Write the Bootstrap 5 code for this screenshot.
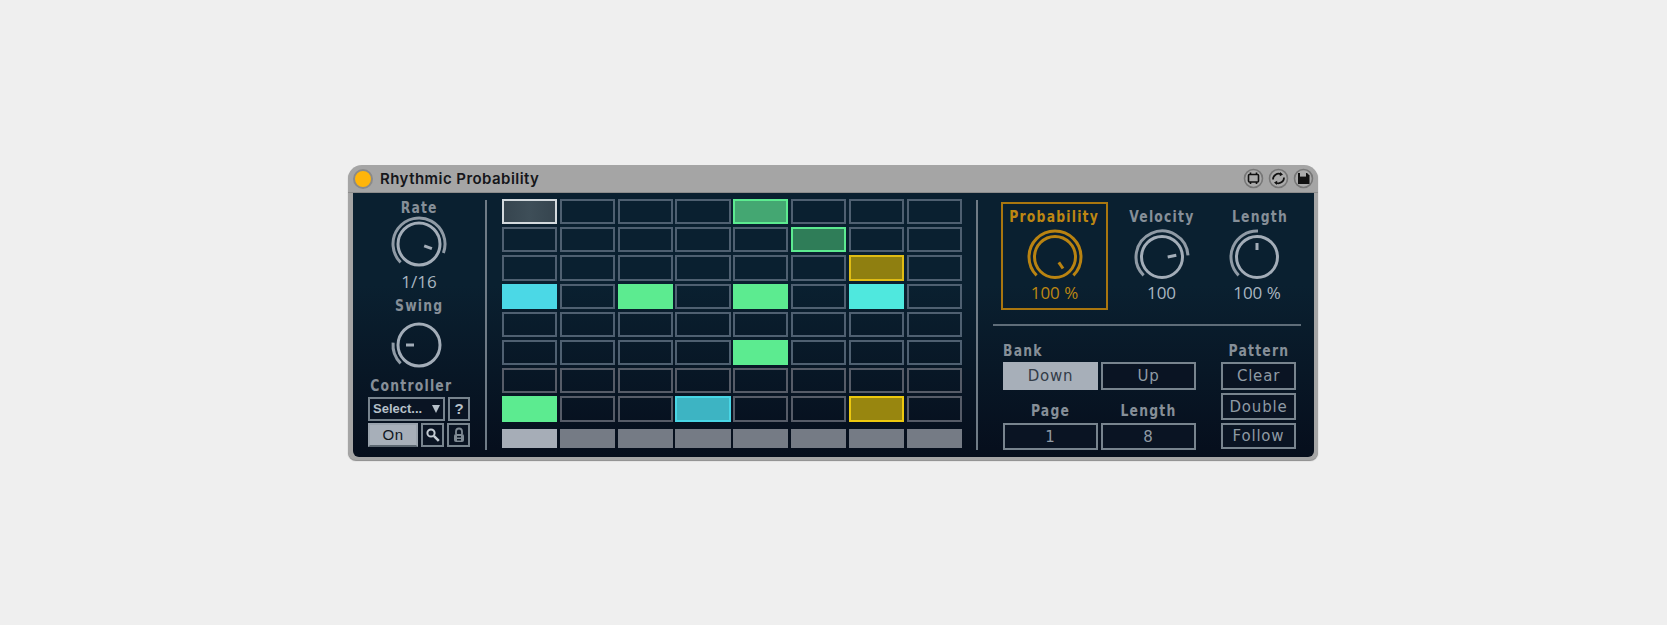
<!doctype html>
<html><head><meta charset="utf-8"><title>Rhythmic Probability</title>
<link href="https://cdn.jsdelivr.net/npm/bootstrap@5.3.0/dist/css/bootstrap.min.css" rel="stylesheet">
<style>
html,body{height:625px;background:#efefef;margin:0}
body{padding:165px 0 0 348px;overflow:hidden}
.dev{width:970px;height:295px;background:#a5a5a5;border-radius:14px 14px 8px 8px;box-shadow:0 1px 1px #8a8a8a}
.tbar{height:28px;padding:0 4px 0 5px;border-bottom:1px solid #8c8c8c}
.dot{width:20px;height:20px;border-radius:50%;background:#ffb50a;border:2px solid #8a8a8a}
.ttl{font:600 15px/1 "Inter",sans-serif;color:#15161a;margin-left:7px;letter-spacing:.45px}
.tb{width:21px;height:21px;display:block;margin-left:4px}
.main{height:264px;margin:0 4px 3px 5px;background:linear-gradient(#0a2030,#0a2030 35%,#060e1c);border-radius:0 0 6px 6px}
.lcol{width:132px;padding-top:6px}
.vline{width:2px;height:250px;margin-top:7px;background:#6f7b86}
.gridcol{width:489px;padding:6px 0 0 14.8px}
.cells{display:grid;grid-template-columns:repeat(8,55.1px);grid-auto-rows:25.2px;gap:3px 2.8px}
.c{border:2px solid #4f6071}
.c.dim{border-color:#565c68}
.w{background:linear-gradient(90deg,#36454f,#3e4e58,#36454f);border-color:#d3d9dd}
.g{background:#5ceb90;border-color:#5ceb90}
.g2{background:#44a772;border-color:#5ceb90}
.g3{background:#2f7d58;border-color:#5ceb90}
.c.y{background:#8f7f10;border-color:#e0bc14}
.c.y2{background:#98860f;border-color:#ecc80f}
.b{background:#4bd8e6;border-color:#4bd8e6}
.b2{background:#4fe8de;border-color:#4fe8de}
.c.b3{background:#3db4c3;border-color:#48d6e6}
.c.g{border-color:#5ceb90}
.strip{display:grid;grid-template-columns:repeat(8,55.1px);gap:2.8px;margin-top:7.6px;height:19px}
.st{background:#757b85}.st1{background:#a6adb7}
.rcol{width:330px;padding:9px 0 0 0}
.lb{font:700 15.5px/18px "DejaVu Sans",sans-serif;letter-spacing:1.5px;color:#868f98;transform:scaleX(.8);white-space:nowrap}
.val{font:400 17px/18px "Open Sans",sans-serif;color:#a9b6c1}
.knob{display:block;width:60px;height:60px}
.knob path,.knob circle{fill:none;stroke:#8f9aa5;stroke-width:3}
.knob .i{stroke:#a3adb8}
.hot .knob path,.hot .knob circle{stroke:#b98311}
.hot .lb,.hot .val{color:#bd8612}
.kb{width:107px;height:108px;padding-top:4px;border:2px solid transparent}
.hot{border-color:#a9760f}
.rsep{height:2px;background:#5f6d79;width:308px;margin:14px 0 0 15px}
.box{border:2px solid #78848e;color:#8f9aa4;font:400 15px/24px "DejaVu Sans",sans-serif;letter-spacing:.8px;text-align:center;background:#0a1423}
.box.on{background:#a7afb9;border-color:#a7afb9;color:#333c48}
.ctrl{font:700 13px/17px "Liberation Sans",sans-serif;color:#b6c0c9;border:2px solid #78848e;background:#0a1423}
</style></head><body>
<div class="dev d-flex flex-column">
 <div class="tbar d-flex align-items-center">
  <div class="dot"></div><div class="ttl flex-grow-1">Rhythmic Probability</div>
  <svg class="tb" viewBox="0 0 21 21"><circle cx="10.5" cy="10.5" r="9" fill="#aaa" stroke="#777" stroke-width="1.6"/><rect x="5.5" y="6.500" width="10" height="7.5" rx="1" fill="none" stroke="#111" stroke-width="1.6"/><path d="M7.5 4.5v2M13.5 4.5v2M7.5 14v2M13.5 14v2" stroke="#111" stroke-width="1.6"/></svg>
  <svg class="tb" viewBox="0 0 21 21"><circle cx="10.5" cy="10.5" r="9" fill="#aaa" stroke="#777" stroke-width="1.6"/><path d="M5 11.5a5.6 5.6 0 0 1 8-5.2M16 9.5a5.6 5.6 0 0 1-8 5.2" fill="none" stroke="#111" stroke-width="1.7"/><path d="M12 4l3 2.6-3.2 1.6zM9 17l-3-2.6 3.2-1.6z" fill="#111"/></svg>
  <svg class="tb" viewBox="0 0 21 21"><circle cx="10.5" cy="10.5" r="9" fill="#aaa" stroke="#777" stroke-width="1.6"/><path d="M5 5h9l2.5 2.5V16H5z" fill="#111"/><rect x="7" y="5" width="6" height="3.6" fill="#aaa"/></svg>
 </div>
 <div class="main d-flex">
  <div class="lcol d-flex flex-column align-items-center">
   <div class="lb">Rate</div>
   <svg class="knob" style="margin-top:-3px" viewBox="0 0 60 60"><path d="M11.62 48.38A26 26 0 1 1 54.43 38.89"/><circle class="i" cx="30" cy="30" r="21"/><path class="i" d="M35.2 31.9L42.9 34.7"/></svg>
   <div class="val" style="margin-top:-1px">1/16</div>
   <div class="lb" style="margin-top:6px">Swing</div>
   <svg class="knob" style="margin-top:0" viewBox="0 0 60 60"><path d="M11.62 48.38A26 26 0 0 1 4.1 27.7"/><circle class="i" cx="30" cy="30" r="21"/><path class="i" d="M25 30H17"/></svg>
   <div class="lb" style="margin:2px 15px 0 0">Controller</div>
   <div class="d-flex" style="gap:3px;width:102px;margin-top:2px">
    <div class="ctrl d-flex justify-content-between align-items-center" style="width:77px;height:24px;padding:0 3px 2px 3px"><span>Select...</span><svg width="8" height="9" viewBox="0 0 8 9"><path d="M0 1h8L4 9z" fill="#b6c0c9"/></svg></div>
    <div class="ctrl text-center" style="width:22px;height:24px;font-size:15px;line-height:19px">?</div>
   </div>
   <div class="d-flex" style="gap:3px;width:102px;margin-top:2px">
    <div class="box on" style="width:51px;height:24px;line-height:20px;font-family:'Liberation Sans',sans-serif;color:#10161f;border-color:#9aa3ad #9aa3ad #5d6872">On</div>
    <div class="ctrl d-flex align-items-center justify-content-center" style="width:23px;height:24px"><svg width="16" height="16" viewBox="0 0 16 16"><circle cx="6" cy="6" r="3.6" fill="none" stroke="#c4ccd3" stroke-width="2"/><path d="M8.8 8.8l5 5" stroke="#c4ccd3" stroke-width="2.6"/></svg></div>
    <div class="ctrl d-flex align-items-center justify-content-center" style="width:23px;height:24px"><svg width="14" height="16" viewBox="0 0 14 16"><path d="M4 7V4.500a3 3 0 0 1 6 0V7" fill="none" stroke="#7f8a94" stroke-width="1.800"/><rect x="2" y="7" width="10" height="8" rx="2" fill="#7f8a94"/><rect x="5" y="9" width="4" height="1.500" fill="#0a1423"/><rect x="5" y="12" width="4" height="1.500" fill="#0a1423"/></svg></div>
   </div>
  </div>
  <div class="vline"></div>
  <div class="gridcol">
   <div class="cells">
    <div class="c w"></div><div class="c"></div><div class="c"></div><div class="c"></div><div class="c g2"></div><div class="c"></div><div class="c"></div><div class="c"></div>
    <div class="c"></div><div class="c"></div><div class="c"></div><div class="c"></div><div class="c"></div><div class="c g3"></div><div class="c"></div><div class="c"></div>
    <div class="c"></div><div class="c"></div><div class="c"></div><div class="c"></div><div class="c"></div><div class="c"></div><div class="c y"></div><div class="c"></div>
    <div class="c b"></div><div class="c"></div><div class="c g"></div><div class="c"></div><div class="c g"></div><div class="c"></div><div class="c b2"></div><div class="c"></div>
    <div class="c"></div><div class="c"></div><div class="c"></div><div class="c"></div><div class="c"></div><div class="c"></div><div class="c"></div><div class="c"></div>
    <div class="c"></div><div class="c"></div><div class="c"></div><div class="c"></div><div class="c g"></div><div class="c"></div><div class="c"></div><div class="c"></div>
    <div class="c dim"></div><div class="c dim"></div><div class="c dim"></div><div class="c dim"></div><div class="c dim"></div><div class="c dim"></div><div class="c dim"></div><div class="c dim"></div>
    <div class="c g"></div><div class="c dim"></div><div class="c dim"></div><div class="c b3"></div><div class="c dim"></div><div class="c dim"></div><div class="c y2"></div><div class="c dim"></div>
   </div>
   <div class="strip"><div class="st st1"></div><div class="st"></div><div class="st"></div><div class="st"></div><div class="st"></div><div class="st"></div><div class="st"></div><div class="st"></div></div>
  </div>
  <div class="vline"></div>
  <div class="rcol">
   <div class="d-flex" style="padding-left:23px">
    <div class="kb hot d-flex flex-column align-items-center">
     <div class="lb">Probability</div>
     <svg class="knob" style="margin-top:1px" viewBox="0 0 60 60"><path d="M11.62 48.38A26 26 0 1 1 48.38 48.38"/><circle class="i" cx="30" cy="30" r="20.500"/><path class="i" d="M33.800 35.400L38 41.500"/></svg>
     <div class="val" style="margin-top:-3px">100 %</div>
    </div>
    <div class="kb d-flex flex-column align-items-center">
     <div class="lb">Velocity</div>
     <svg class="knob" style="margin-top:1px" viewBox="0 0 60 60"><path d="M11.62 48.38A26 26 0 1 1 56 28.3"/><circle class="i" cx="30" cy="30" r="20.500"/><path class="i" d="M35.700 30L44.300 28.300"/></svg>
     <div class="val" style="margin-top:-3px">100</div>
    </div>
    <div class="kb d-flex flex-column align-items-center" style="width:88px;margin-left:-2px">
     <div class="lb" style="margin-left:6px">Length</div>
     <svg class="knob" style="margin-top:1px" viewBox="0 0 60 60"><path d="M11.62 48.38A26 26 0 0 1 31 4"/><circle class="i" cx="30" cy="30" r="20.500"/><path class="i" d="M30 16V23"/></svg>
     <div class="val" style="margin-top:-3px">100 %</div>
    </div>
   </div>
   <div class="rsep"></div>
   <div class="d-flex" style="padding:16px 0 0 25px">
    <div style="width:218px">
     <div class="lb" style="transform-origin:left">Bank</div>
     <div class="d-flex" style="gap:3px;margin-top:2px">
      <div class="box on" style="width:95px;height:28px">Down</div>
      <div class="box" style="width:95px;height:28px">Up</div>
     </div>
     <div class="d-flex" style="gap:3px;margin-top:12px">
      <div class="lb text-center" style="width:95px">Page</div>
      <div class="lb text-center" style="width:95px">Length</div>
     </div>
     <div class="d-flex" style="gap:3px;margin-top:3px">
      <div class="box" style="width:95px;height:27px">1</div>
      <div class="box" style="width:95px;height:27px">8</div>
     </div>
    </div>
    <div class="d-flex flex-column" style="width:75px">
     <div class="lb text-center">Pattern</div>
     <div class="box" style="height:28px;margin-top:2px">Clear</div>
     <div class="box" style="height:27px;margin-top:3px">Double</div>
     <div class="box" style="height:26px;margin-top:3px;line-height:23px">Follow</div>
    </div>
   </div>
  </div>
 </div>
</div>
</body></html>
